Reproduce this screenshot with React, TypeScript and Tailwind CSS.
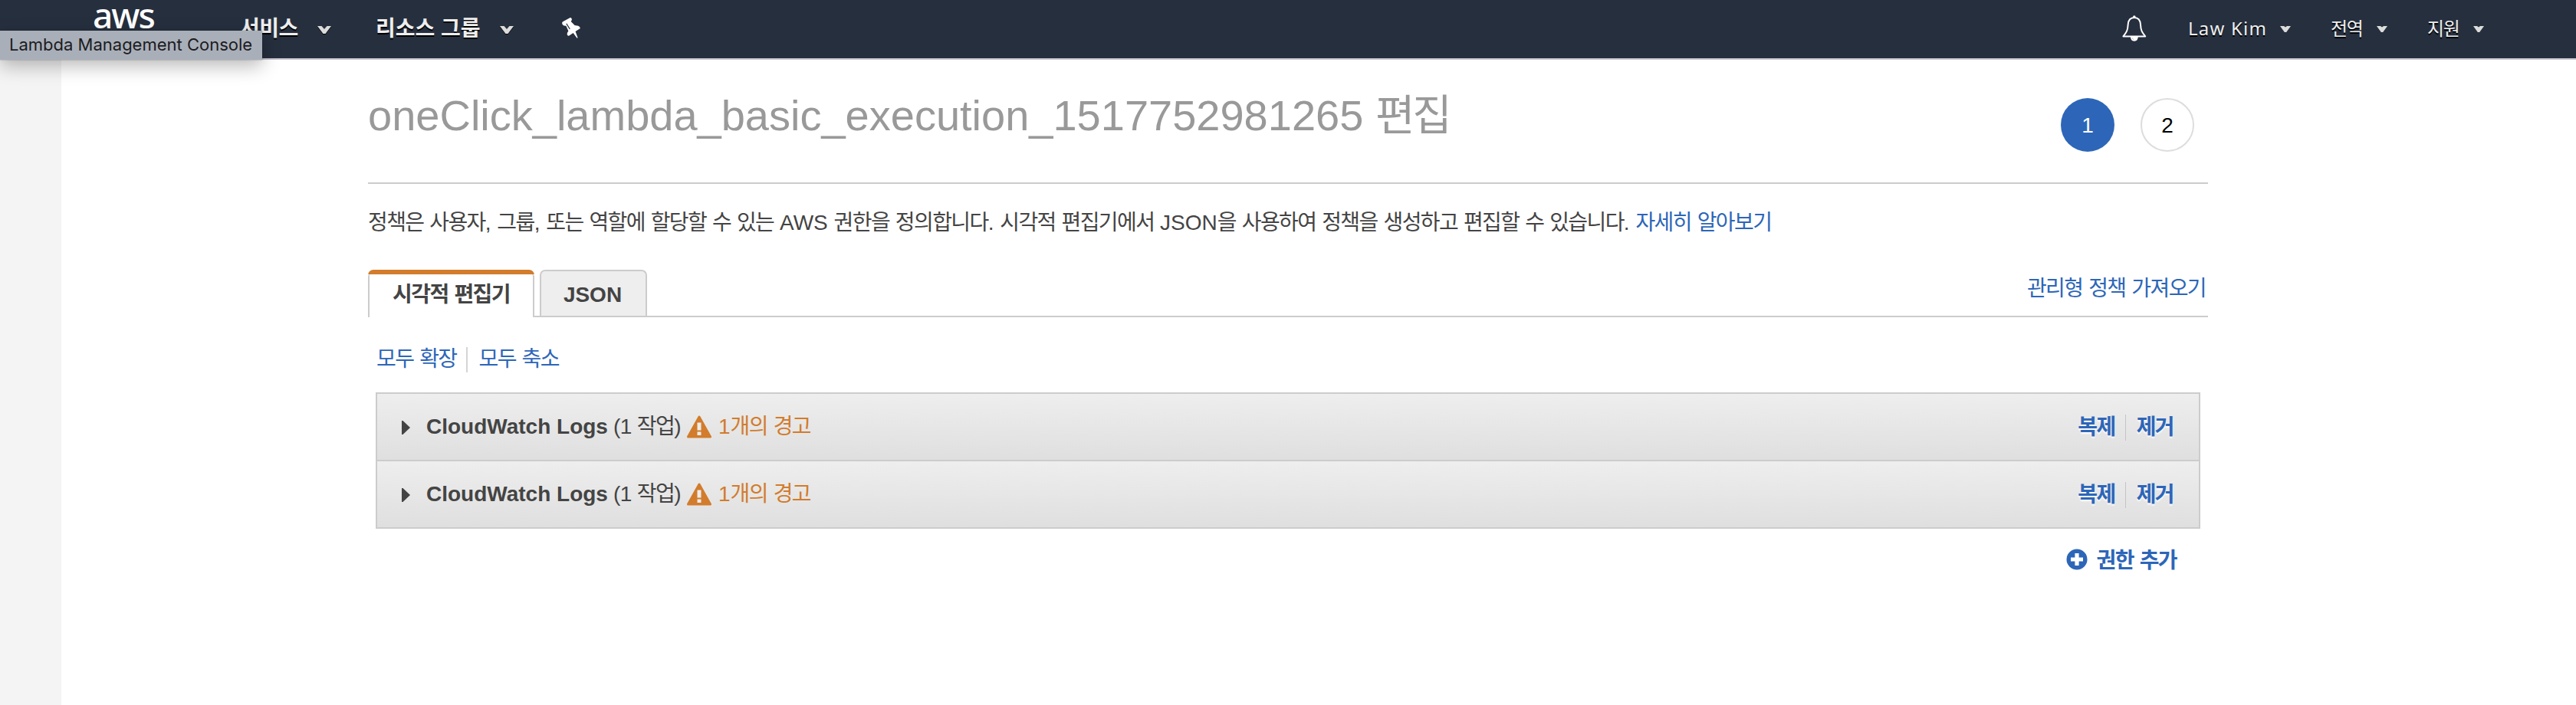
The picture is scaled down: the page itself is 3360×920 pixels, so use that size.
type TextProps = { children: string; className?: string };

/* Hangul runs are tracked slightly tighter than the Latin runs beside them. */
function Txt({ children, className = "" }: TextProps) {
  const parts = children.match(/[\uac00-\ud7a3]+|[^\uac00-\ud7a3]+/g) ?? [];
  return (
    <span className={`leading-10 whitespace-pre ${className}`}>
      {parts.map((part, i) =>
        /[\uac00-\ud7a3]/.test(part) ? (
          <span key={i} className="tracking-[-0.057em]">
            {part}
          </span>
        ) : (
          part
        ),
      )}
    </span>
  );
}

function Caret() {
  return (
    <svg viewBox="0 0 18 10" className="h-[10px] w-[18px] shrink-0 drop-shadow-[0_1px_0_#000]">
      <path d="M0 0h5.500l3.500 4 3.500-4H18L10.500 10h-3z" fill="#dcdcdc" />
    </svg>
  );
}

function SmallCaret() {
  return (
    <svg viewBox="0 0 14 8" className="h-[8px] w-[14px] shrink-0">
      <path d="M0 0h5l2 1.600L9 0h5L8.200 8H5.800z" fill="#dcdcdc" />
    </svg>
  );
}

function PinIcon() {
  return (
    <svg viewBox="100 38 72 82" className="mt-[23px] h-[27px] w-[24px] shrink-0">
      <path
        d="M103 54L131 38.500q5-1 7 4t-2 9l-1 2 15 15 14 2q7 2 8 10L159 89l-6 4 9 25-3 1-15-20-17 11q-6 1-7-6-1-6 5-13L116 71l-8-1q-8-3-8-10 0-4 3-6z"
        fill="#fff"
      />
      <path d="M118 63l12 19" stroke="#262f3e" strokeWidth="4" strokeLinecap="round" />
    </svg>
  );
}

function BellIcon() {
  return (
    <svg viewBox="54 29 97 104" className="mt-[20px] h-[34px] w-[32px] shrink-0" fill="none">
      <path
        d="M102 38c-17 0-24 12-25 28-1 22-5 30-19 47h88c-14-17-18-25-19-47-1-16-8-28-25-28z"
        stroke="#fff"
        strokeWidth="6"
        strokeLinejoin="round"
      />
      <circle cx="102" cy="35" r="5.500" fill="#fff" />
      <path d="M87 115h30q0 17-15 17t-15-17z" fill="#fff" />
      <path d="M93 119l6 7" stroke="#7b828c" strokeWidth="2" />
    </svg>
  );
}

function WarningIcon() {
  return (
    <svg viewBox="0 0 32 30" className="h-[30px] w-[32px] shrink-0">
      <path d="M16 2L30.500 28h-29z" fill="#d27c2c" stroke="#d27c2c" strokeWidth="3" strokeLinejoin="round" />
      <path d="M13.500 9.500h5v10h-5zM13.500 21.500h5v4.500h-5z" fill="#ececec" />
    </svg>
  );
}

function PlusIcon() {
  return (
    <svg viewBox="0 0 28 28" className="h-[28px] w-[28px] shrink-0">
      <circle cx="14" cy="14" r="13.500" fill="#2d66b8" />
      <path d="M14 6v16M6 14h16" stroke="#fff" strokeWidth="5.200" />
    </svg>
  );
}

function Header() {
  return (
    <header className="relative h-[78px] border-b-2 border-[#c9c6cf] bg-[#262f3e] text-[#eee]">
      <div className="flex h-[76px] items-start">
        <span className="ml-[121px] w-[79px] font-['Noto_Sans',sans-serif] text-[46px] leading-[38px] font-medium tracking-[-2px] text-white">
          aws
        </span>
        <nav className="ml-[113px] flex items-start font-bold [text-shadow:0_2px_0_#000]">
          <span className="mt-[18px] w-[101px] leading-10 tracking-[-0.5px] whitespace-nowrap">서비스</span>
          <div className="mt-[34px]">
            <Caret />
          </div>
          <span className="mt-[18px] ml-[58px] w-[162px] leading-10 whitespace-nowrap">리소스 그룹</span>
          <div className="mt-[34px]">
            <Caret />
          </div>
        </nav>
        <div className="ml-[63px]">
          <PinIcon />
        </div>
        <div className="ml-auto flex items-start pr-[120px] text-[24px] [text-shadow:0_2px_0_#000]">
          <BellIcon />
          <span className="mt-[17px] ml-[54px] w-[120px] font-['Noto_Sans',sans-serif] leading-10 tracking-[1.2px] whitespace-nowrap">
            Law Kim
          </span>
          <div className="mt-[34px]">
            <SmallCaret />
          </div>
          <Txt className="mt-[18px] ml-[52px] w-[60px]">전역</Txt>
          <div className="mt-[34px]">
            <SmallCaret />
          </div>
          <Txt className="mt-[18px] ml-[52px] w-[60px]">지원</Txt>
          <div className="mt-[34px]">
            <SmallCaret />
          </div>
        </div>
      </div>
      <div className="absolute top-[40px] left-0 h-[38px] w-[342px] bg-[#a9afb9] pl-[12px] font-['Inter',sans-serif] text-[22px] leading-[36px] whitespace-nowrap text-[#1c1c1e] shadow-[0_8px_24px_rgba(0,0,0,0.28),0_0_2px_rgba(0,0,0,0.3)]">
        Lambda Management Console
      </div>
    </header>
  );
}

function StatementRow() {
  return (
    <div className="flex h-[88px] items-center border-b-2 border-[#ccc] bg-linear-to-b from-[#eee] to-[#dfdfdf] pr-[33px] pb-px pl-[32px]">
      <svg viewBox="0 0 11 18" className="mt-[3px] h-[18px] w-[11px] shrink-0">
        <path d="M0 0h1.500L11 9l-9.500 9H0z" fill="#444" />
      </svg>
      <Txt className="ml-[21px] font-bold">CloudWatch Logs</Txt>
      <Txt className="ml-[7px] w-[90px] tracking-[-0.6px]">(1 작업)</Txt>
      <div className="ml-[6px]">
        <WarningIcon />
      </div>
      <Txt className="ml-[9px] text-[#d27c2c]">1개의 경고</Txt>
      <div className="mt-[3px] ml-auto flex items-center font-bold text-[#2d66b8] [text-shadow:0_2px_2px_#fff]">
        <Txt>복제</Txt>
        <div className="ml-[13px] h-[34px] w-px bg-[#c4c4c4]" />
        <Txt className="ml-[14px]">제거</Txt>
      </div>
    </div>
  );
}

export default function App() {
  return (
    <div className="flex h-[920px] w-[3360px] flex-col bg-white font-['Liberation_Sans','Noto_Sans_CJK_KR',sans-serif] text-[28px] text-[#444]">
      <Header />
      <div className="flex flex-1">
        <aside className="w-[80px] bg-[#f4f4f4]" />
        <main className="ml-[400px] w-[2400px]">
          <div className="flex h-[162px] items-start justify-between border-b-2 border-[#ccc] pr-[18px]">
            <h1 className="mt-[37px]">
              <Txt className="text-[56px] leading-[72px] text-[#999]">
                oneClick_lambda_basic_execution_1517752981265 편집
              </Txt>
            </h1>
            <div className="mt-[50px] flex gap-[34px]">
              <div className="flex size-[70px] items-center justify-center rounded-full bg-[#2d66b8] pt-[2px] text-white">
                1
              </div>
              <div className="flex size-[70px] items-center justify-center rounded-full border-2 border-[#ddd] pt-[2px] text-black">
                2
              </div>
            </div>
          </div>

          <p className="mt-[31px] h-10 leading-10 whitespace-nowrap">
            <Txt>
              정책은 사용자, 그룹, 또는 역할에 할당할 수 있는 AWS 권한을 정의합니다. 시각적 편집기에서 JSON을 사용하여 정책을 생성하고 편집할 수 있습니다.
            </Txt>{" "}
            <Txt className="text-[#2d66b8]">자세히 알아보기</Txt>
          </p>

          <div className="mt-[41px] flex h-[62px] font-bold">
            <div className="flex w-[217px] flex-col overflow-hidden rounded-t-[7px]">
              <div className="h-[6px] bg-[#d27c2c]" />
              <div className="flex flex-1 justify-center rounded-t-[3px] border-x-2 border-[#ccc] pt-[7px]">
                <Txt>시각적 편집기</Txt>
              </div>
            </div>
            <div className="w-[7px] border-b-2 border-[#ccc]" />
            <div className="flex w-[140px] flex-col border-b-2 border-[#ccc]">
              <div className="flex flex-1 justify-center rounded-t-[7px] border-x-2 border-t-2 border-[#ccc] bg-[#eee] pt-[11px] pr-[2px]">
                <Txt>JSON</Txt>
              </div>
            </div>
            <div className="flex flex-1 justify-end border-b-2 border-[#ccc] pt-[5px] pr-[3px] font-normal">
              <Txt className="text-[#2d66b8]">관리형 정책 가져오기</Txt>
            </div>
          </div>

          <div className="mt-[35px] flex h-10 items-center pl-[11px] text-[#2d66b8]">
            <Txt>모두 확장</Txt>
            <div className="ml-[13px] h-[33px] w-[2px] bg-[#d5d5d5]" />
            <Txt className="ml-[14px]">모두 축소</Txt>
          </div>

          <div className="mt-[23px] mr-[10px] ml-[10px] border-x-2 border-t-2 border-[#ccc]">
            <StatementRow />
            <StatementRow />
          </div>

          <div className="mt-[22px] flex h-10 items-center justify-end pr-[41px] font-bold text-[#2d66b8]">
            <div className="-mt-[4px]">
              <PlusIcon />
            </div>
            <Txt className="ml-[12px]">권한 추가</Txt>
          </div>
        </main>
      </div>
    </div>
  );
}
